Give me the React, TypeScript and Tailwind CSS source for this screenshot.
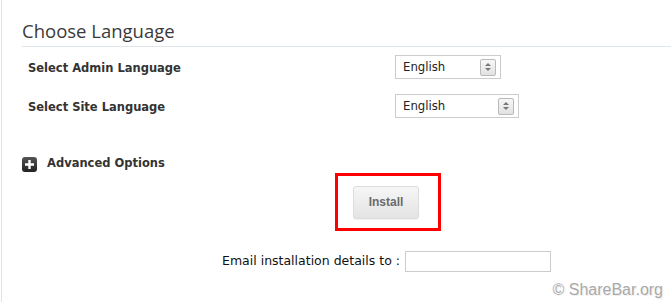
import React from 'react'

function Spinner() {
  return (
    <span className="flex h-[17px] w-[16px] flex-col items-center justify-center gap-[2px] rounded-[2px] border border-[#b9b9b9] bg-gradient-to-b from-[#f7f7f7] to-[#e2e2e2]">
      <span className="h-0 w-0 border-x-[3px] border-b-[3px] border-x-transparent border-b-[#777]" />
      <span className="h-0 w-0 border-x-[3px] border-t-[3px] border-x-transparent border-t-[#777]" />
    </span>
  )
}

function FakeSelect({ width }: { width: string }) {
  return (
    <div className={`flex h-[24px] ${width} items-center justify-between border border-[#cccccc] bg-white pl-[7px] pr-[4px]`}>
      <span className="text-[13px] text-[#222]" style={{ fontFamily: 'Tahoma, "DejaVu Sans Condensed", "Liberation Sans", sans-serif' }}>
        English
      </span>
      <Spinner />
    </div>
  )
}

export default function App() {
  const label = { fontFamily: '"DejaVu Sans", Verdana, sans-serif' }
  return (
    <div className="h-[302px] w-[671px] overflow-hidden bg-white">
      <div className="ml-px h-full border-l border-[#e3e3e3] pl-[20px]">
        <h2
          className="pt-[21px] pb-[5px] text-[18.5px] leading-[20px] text-[#3a3a3a]"
          style={{ fontFamily: '"Open Sans", sans-serif' }}
        >
          Choose Language
        </h2>
        <div className="h-px bg-[#dfe7ee]" />

        <div className="mt-[8px] flex items-center pl-[6px]" style={label}>
          <span className="w-[367px] pt-[4px] text-[11.5px] font-bold text-[#333]">Select Admin Language</span>
          <FakeSelect width="w-[106px]" />
        </div>
        <div className="mt-[15px] flex items-center pl-[6px]" style={label}>
          <span className="w-[367px] pt-[4px] text-[11.5px] font-bold text-[#333]">Select Site Language</span>
          <FakeSelect width="w-[124px]" />
        </div>

        <div className="mt-[37px] flex h-[18px] items-center gap-[10px]" style={label}>
          <span className="flex h-[15px] w-[15px] items-center justify-center rounded-[3px] bg-gradient-to-b from-[#555] to-[#222]">
            <svg width="9" height="9" viewBox="0 0 9 9">
              <path d="M3.3 0h2.4v3.3H9v2.4H5.7V9H3.3V5.7H0V3.3h3.3z" fill="#fff" />
            </svg>
          </span>
          <span className="text-[11.5px] font-bold text-[#333]">Advanced Options</span>
        </div>

        <div className="ml-[313px] mt-0 flex h-[58px] w-[106px] items-center justify-center border-[3px] border-[#ff0000] pr-[4px]">
          <button
            className="h-[33px] w-[66px] rounded-[3px] border border-[#dcdcdc] bg-gradient-to-b from-[#f6f6f6] to-[#e4e4e4] text-[12px] font-bold text-[#6a6a6a] shadow-[0_1px_1px_rgba(0,0,0,0.06)]"
            style={{ fontFamily: '"Liberation Sans", Arial, sans-serif' }}
          >
            Install
          </button>
        </div>

        <div className="mt-[20px] flex items-center pl-[200px]" style={label}>
          <span className="text-[12.5px] text-[#111]">Email installation details to :</span>
          <div className="ml-[5px] h-[21px] w-[146px] border border-[#cccccc] bg-white" />
        </div>

        <div className="mt-[9px] flex justify-end pr-[8px]">
          <span
            className="text-[16px] leading-[18px] text-[#a9a9a9] [text-shadow:0_0_2px_#fff,1px_1px_1px_#e8e8e8]"
            style={{ fontFamily: '"Liberation Sans", Arial, sans-serif' }}
          >
            © ShareBar.org
          </span>
        </div>
      </div>
    </div>
  )
}
